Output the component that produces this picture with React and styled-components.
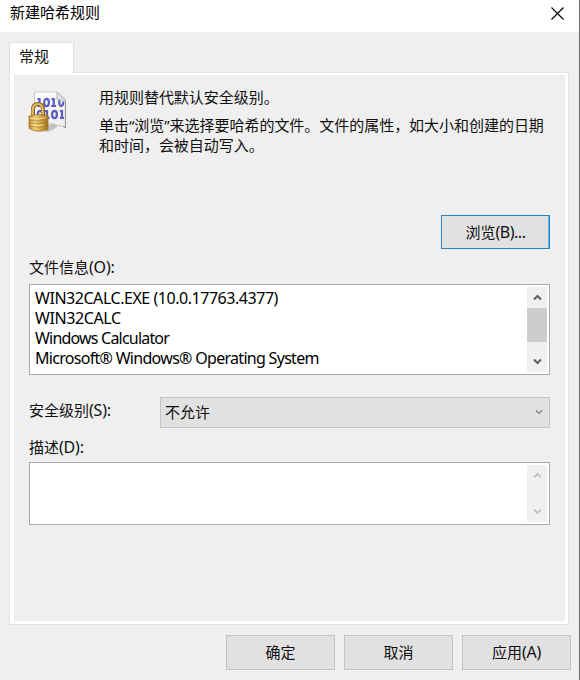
import React from 'react';
import styled, { createGlobalStyle } from 'styled-components';

const Global = createGlobalStyle`
  *, *::before, *::after { box-sizing: border-box; }
  body {
    margin: 0;
    background: #efefef;
    color: #101010;
    font: 15px/20px "Noto Sans", "Noto Sans CJK SC", sans-serif;
    overflow: hidden;
  }
`;

const Dialog = styled.div`
  display: flex;
  flex-direction: column;
  width: 580px;
  height: 680px;
  background: #efefef;
  border-right: 1px solid #6e6e6e;
`;

const TitleBar = styled.header`
  display: flex;
  justify-content: space-between;
  height: 32px;
  padding: 2px 15px 0 10px;
  background: #fff;
  color: #000;
`;

const CloseIcon = styled.svg`
  width: 13px;
  height: 13px;
  margin-top: 5px;
`;

const Tabs = styled.div`
  display: flex;
  height: 31px;
  margin: 10px 0 -1px 9px;
`;

const Tab = styled.div`
  position: relative;
  z-index: 1;
  width: 65px;
  height: 32px;
  padding: 3px 9px 0;
  background: #fff;
  border: 1px solid #e0e0e0;
  border-bottom: 0;
`;

const Page = styled.main`
  display: flex;
  width: 560px;
  height: 553px;
  margin-left: 9px;
  padding: 2px 3px 3px 4px;
  background: #fff;
  border: 1px solid #e3e3e3;
`;

const Panel = styled.div`
  flex: 1;
  display: flex;
  flex-direction: column;
  padding: 12px 15px 0 15px;
  background: #efefef;
`;

const Intro = styled.section`
  display: flex;
  height: 128px;
`;

const HashIcon = styled.svg`
  flex: none;
  width: 40px;
  height: 44px;
  margin: 3px 31px 0 -1px;
`;

const Copy = styled.div`
  white-space: nowrap;
`;

const Paragraph = styled.p`
  margin: 0 0 8px;
  letter-spacing: -0.03px;
`;

const Text = styled.span`
  white-space: nowrap;
`;

const Latin = styled.span`
  font-size: 16px;
  letter-spacing: ${({ $tracking = 0 }) => $tracking}px;
  white-space: nowrap;
`;

const Button = styled.button`
  display: flex;
  align-items: center;
  justify-content: center;
  width: 109px;
  height: ${({ $focused }) => ($focused ? 34 : 35)}px;
  padding: 0 0 1px;
  font: inherit;
  color: inherit;
  background: #e1e1e1;
  border: 1px solid ${({ $focused }) => ($focused ? '#2584d6' : '#c3c3c3')};
  box-shadow: ${({ $focused }) => ($focused ? 'inset -1px 0 #69afe8' : 'none')};
`;

const BrowseRow = styled.div`
  display: flex;
  justify-content: flex-end;
  margin-bottom: 8px;
`;

const Label = styled.label`
  height: 20px;
  white-space: nowrap;
`;

const TextBox = styled.div`
  display: flex;
  justify-content: space-between;
  width: 521px;
  height: ${({ $height }) => $height}px;
  padding: 2px 2px 2px 5px;
  background: #fff;
  border: 1px solid #a9a9a9;
  color: #000;
`;

const FileInfo = styled(TextBox)`
  margin: 7px 0 22px;
`;

const Lines = styled.div`
  display: flex;
  flex-direction: column;
  padding-top: 1px;
`;

const ScrollBar = styled.div`
  display: flex;
  flex-direction: column;
  justify-content: space-between;
  width: 20px;
  background: #f0f0f0;
  color: ${({ $disabled }) => ($disabled ? '#bdbdbd' : '#606060')};
`;

const ScrollArrow = styled.div`
  display: flex;
  align-items: center;
  justify-content: center;
  height: 21px;
`;

const Thumb = styled.div`
  width: 20px;
  height: 34px;
  margin-bottom: 9px;
  background: #cdcdcd;
`;

const Chevron = styled.svg`
  width: ${({ $size }) => $size}px;
  height: ${({ $size }) => $size}px;
  fill: none;
  stroke: currentColor;
  stroke-width: ${({ $weight }) => $weight};
`;

const LevelRow = styled.div`
  display: flex;
  justify-content: space-between;
  height: 31px;
  margin-bottom: 9px;
`;

const LevelLabel = styled(Label)`
  margin-top: 3px;
`;

const Select = styled.div`
  display: flex;
  align-items: center;
  justify-content: space-between;
  width: 390px;
  height: 31px;
  padding: 0 6px 1px 4px;
  background: #e1e1e1;
  border: 1px solid #c5c5c5;
  color: #111;

  ${Chevron} {
    color: #808080;
  }
`;

const Description = styled(TextBox)`
  margin-top: 5px;
`;

const Footer = styled.footer`
  display: flex;
  justify-content: flex-end;
  gap: 9px;
  padding: 10px 8px 0 0;
`;

function Arrow({ up, size = 9, weight = 2 }) {
  return (
    <Chevron viewBox="0 0 9 9" $size={size} $weight={weight}>
      <path d={up ? 'M1 6.5 4.5 3 8 6.5' : 'M1 2.5 4.5 6 8 2.5'} />
    </Chevron>
  );
}

function Scroll({ disabled }) {
  return (
    <ScrollBar $disabled={disabled}>
      <ScrollArrow><Arrow up weight={disabled ? 1.6 : 2} /></ScrollArrow>
      {!disabled && <Thumb />}
      <ScrollArrow><Arrow weight={disabled ? 1.6 : 2} /></ScrollArrow>
    </ScrollBar>
  );
}

function LockedDocument() {
  return (
    <HashIcon viewBox="0 0 40 44">
      <defs>
        <linearGradient id="paper" x1="0" y1="0" x2="1" y2="1">
          <stop offset="0" stopColor="#fff" />
          <stop offset="1" stopColor="#ececec" />
        </linearGradient>
        <linearGradient id="brass">
          <stop offset="0" stopColor="#b8872f" />
          <stop offset=".3" stopColor="#ecd07c" />
          <stop offset=".65" stopColor="#d0a244" />
          <stop offset="1" stopColor="#9a6d24" />
        </linearGradient>
      </defs>
      <path d="M17 37 Q25 32 30 35 Q25 42 17 42Z" fill="#999" opacity=".55" />
      <path d="M6.5 2H29L37.5 10V38Q34 34.5 29 35.5Q24 32 18 35L6.5 34Z" fill="url(#paper)" stroke="#bdbdbd" strokeWidth=".8" />
      <path d="M37.4 11V38L35 36" fill="none" stroke="#949494" />
      <g fill="none" stroke="#5b5bc0" strokeWidth="2.2">
        <path d="M9.5 9.2H11.5V16M9.5 16H14M23.5 9.2H25.7V16M23.2 16H28" />
        <ellipse cx="18.5" cy="12.5" rx="2.4" ry="3.6" />
        <path d="M31.3 9V13Q31.6 16 33.3 16Q35.3 15.7 35.3 11.5" />
        <ellipse cx="12" cy="24.5" rx="2.3" ry="3.7" />
        <path d="M17 21.2H19V28M16.8 28H21.5M32 21.2H34V28M32 28H36" />
        <ellipse cx="26.5" cy="24.5" rx="2.4" ry="3.7" />
      </g>
      <path d="M29 2V10H37.5Z" fill="#e1e1e1" stroke="#aaa" strokeWidth=".8" />
      <path d="M5 27V20Q5 14 10 14Q15 14 15 20V27" fill="none" stroke="#8b6423" strokeWidth="4" />
      <path d="M4.7 26V20Q5 14 10 14Q14.5 14 14.7 20V26" fill="none" stroke="#dfb95f" strokeWidth="2.2" />
      <path d="M1 26Q10 23.5 20 25V39.5Q10 43.5 1 38.5Z" fill="url(#brass)" stroke="#a8792e" strokeWidth=".8" />
      <path d="M1.5 30Q10 32 19 29M1.5 33Q10 35 19 32.5M1.5 36Q10 38.5 19 36" fill="none" stroke="#9c7228" strokeWidth=".8" opacity=".6" />
      <path d="M2 28.5Q10 30 18 27.5M3 34.5Q10 36 16 35" fill="none" stroke="#ffe9a4" strokeWidth="1" opacity=".8" />
    </HashIcon>
  );
}

export default function App() {
  return (
    <>
      <Global />
      <Dialog>
        <TitleBar>
          <Text>新建哈希规则</Text>
          <CloseIcon viewBox="0 0 13 13">
            <path d="M.5 .5 12.5 12.5M12.5 .5 .5 12.5" stroke="#000" strokeWidth="1.15" />
          </CloseIcon>
        </TitleBar>
        <Tabs><Tab>常规</Tab></Tabs>
        <Page>
          <Panel>
            <Intro>
              <LockedDocument />
              <Copy>
                <Paragraph>用规则替代默认安全级别。</Paragraph>
                <Paragraph>
                  单击“浏览”来选择要哈希的文件。文件的属性，如大小和创建的日期<br />
                  和时间，会被自动写入。
                </Paragraph>
              </Copy>
            </Intro>
            <BrowseRow><Button $focused><Text>浏览<Latin $tracking={-0.5}>(B)...</Latin></Text></Button></BrowseRow>
            <Label>文件信息<Latin $tracking={-0.2}>(O):</Latin></Label>
            <FileInfo $height={91}>
              <Lines>
                <Latin $tracking={-0.46}>WIN32CALC.EXE (10.0.17763.4377)</Latin>
                <Latin $tracking={-0.4}>WIN32CALC</Latin>
                <Latin $tracking={-0.8}>Windows Calculator</Latin>
                <Latin $tracking={-0.7}>Microsoft® Windows® Operating System</Latin>
              </Lines>
              <Scroll />
            </FileInfo>
            <LevelRow>
              <LevelLabel>安全级别<Latin $tracking={-0.2}>(S):</Latin></LevelLabel>
              <Select>不允许<Arrow size={8} weight={1.3} /></Select>
            </LevelRow>
            <Label>描述<Latin $tracking={-0.2}>(D):</Latin></Label>
            <Description $height={63}><span /><Scroll disabled /></Description>
          </Panel>
        </Page>
        <Footer>
          <Button>确定</Button>
          <Button>取消</Button>
          <Button><Text>应用<Latin $tracking={-0.2}>(A)</Latin></Text></Button>
        </Footer>
      </Dialog>
    </>
  );
}
